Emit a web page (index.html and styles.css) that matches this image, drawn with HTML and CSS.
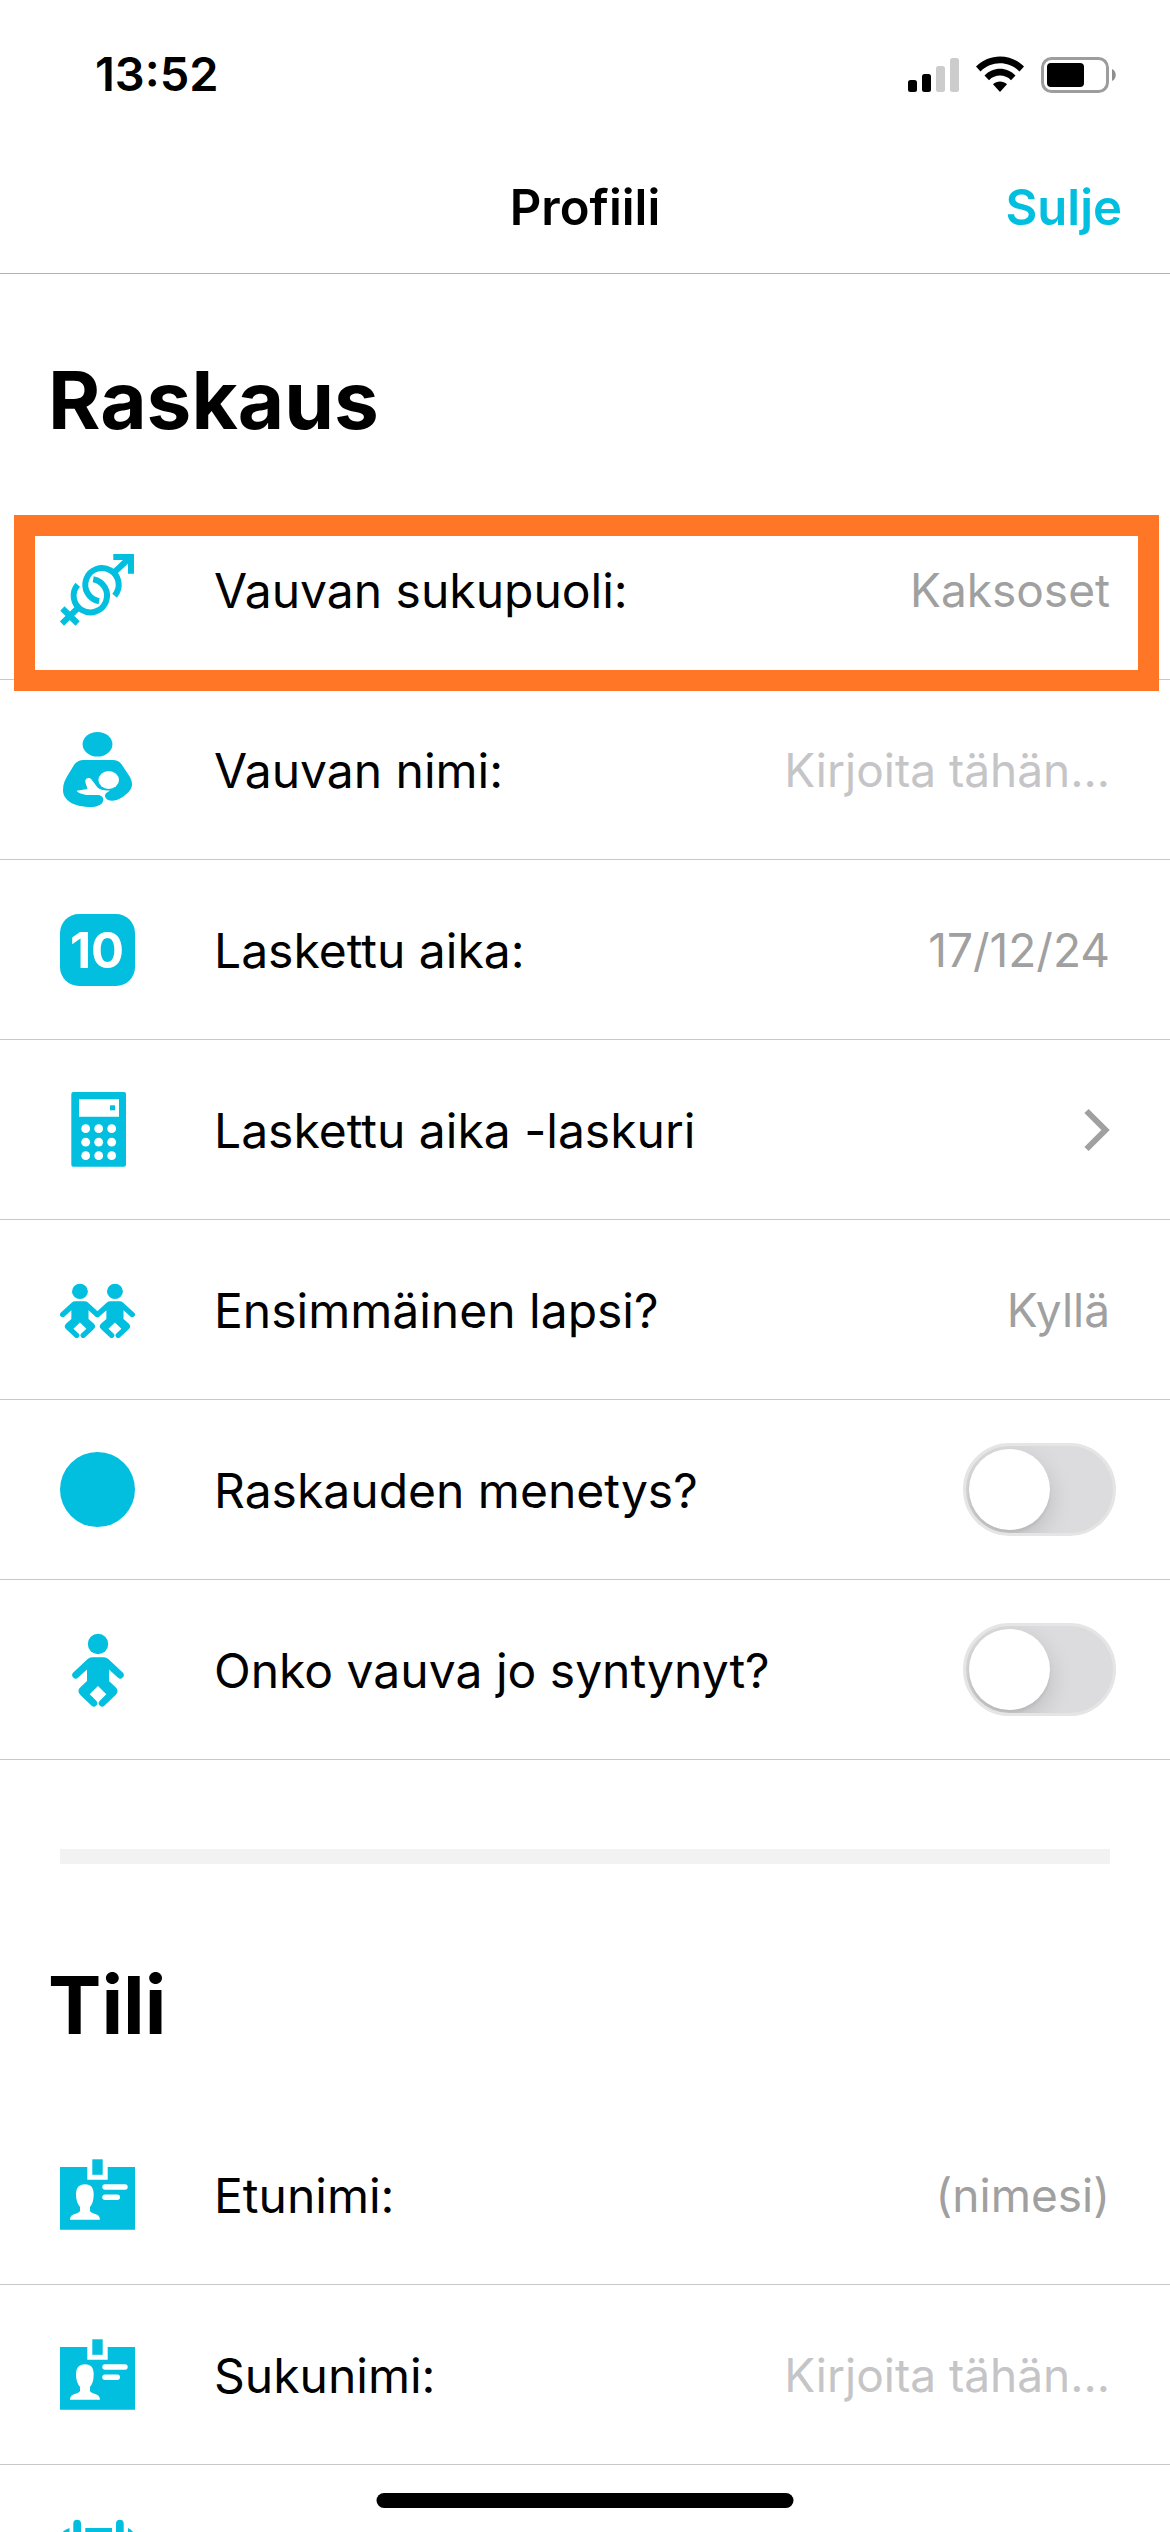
FILE: index.html
```html
<!DOCTYPE html>
<html lang="fi">
<head>
<meta charset="utf-8">
<meta name="viewport" content="width=device-width, initial-scale=1">
<title>Profiili</title>
<link rel="stylesheet" href="styles.css">
</head>
<body>
<svg class="sprite" aria-hidden="true">
  <symbol id="baby" viewBox="0 0 75 75">
    <circle cx="38" cy="12" r="10.2"/>
    <path d="M32 25.3H44Q46.500 25.300 48.300 27L62.700 40.600A3.400 3.400 0 0 1 57.800 45.600L49 37.500V49L55.600 55.300Q59.500 59 55.600 62.900L44.600 73.600A3.400 3.400 0 0 1 39.800 68.700L46.300 62.300L38 54L29.700 62.300L36.200 68.700A3.400 3.400 0 0 1 31.400 73.600L20.400 62.900Q16.500 59 20.400 55.300L27 49V37.500L18.200 45.600A3.400 3.400 0 0 1 13.300 40.600L27.700 27Q29.500 25.300 32 25.300Z"/>
  </symbol>
  <symbol id="badge" viewBox="0 0 75 75">
    <path d="M0 10H27.300V22.700H47.700V10H75V72.700H0Z"/>
    <rect x="32.300" y="2.300" width="10.400" height="15.500"/>
    <path class="cut" d="M25 27.300C31 27.300 33.700 31 33.700 37C33.700 43 32.500 47 30 50V54C31 57.500 40 55.500 40 62.700H10C10 55.500 19 57.500 20 54V50C17.500 47 16 43 16 37C16 31 19 27.300 25 27.300Z"/>
    <rect class="cut" x="42.300" y="27.300" width="25.400" height="5.400" rx="2.700"/>
    <rect class="cut" x="42.300" y="37.500" width="17.700" height="5.400" rx="2.700"/>
  </symbol>
</svg>

<div class="app">
  <header class="top">
    <div class="status">
      <time class="clock">13:52</time>
      <svg class="indicators" viewBox="0 0 208 37" aria-hidden="true">
        <rect x="0" y="24" width="9" height="12" rx="2.500"/>
        <rect x="14" y="18" width="9" height="18" rx="2.500"/>
        <rect class="off" x="28" y="10" width="9" height="26" rx="2.500"/>
        <rect class="off" x="42" y="2" width="9" height="34" rx="2.500"/>
        <path d="M68 10.500C81 -3 103 -3 116 10.500L111.500 15.500C101 4.500 83 4.500 72.500 15.500Z"/>
        <path d="M76.500 19.500C85 10.500 99 10.500 107.500 19.500L103 24.200C97 18 87 18 81 24.200Z"/>
        <path d="M85 28.200C89 24.500 95 24.500 99 28.200L92 36Z"/>
        <rect class="shell" x="134.500" y="2.500" width="65" height="33" rx="9"/>
        <rect x="139" y="7" width="37" height="24" rx="4"/>
        <path class="nub" d="M204 13C209 15 209 23 204 25Z"/>
      </svg>
    </div>
    <nav class="bar">
      <h1 class="title">Profiili</h1>
      <button class="close" type="button">Sulje</button>
    </nav>
  </header>

  <main class="content">
    <section>
      <h2 class="heading">Raskaus</h2>

      <div class="row row-marked">
        <svg class="icon" viewBox="0 0 75 75" aria-hidden="true">
          <g class="line">
            <path d="M54.600 43.700A16.700 16.700 0 1 0 39.100 49.200"/>
            <path d="M17.700 32.700A16.700 16.700 0 1 0 33.200 27.200"/>
            <path d="M53.500 21L70 5.500M53.300 5H71V21.700M18.500 55.500L1.900 71.500M2.400 56.500L17.600 71.500"/>
          </g>
        </svg>
        <label class="label" for="gender">Vauvan sukupuoli:</label>
        <select class="value" id="gender"><option>Kaksoset</option></select>
      </div>

      <div class="row">
        <svg class="icon" viewBox="0 0 75 75" aria-hidden="true">
          <ellipse cx="37.500" cy="12.300" rx="14.900" ry="12.300"/>
          <path d="M23.500 28H52.500C57 28 60 30 62 33L69 43.500C73 50 73 55 69 59.500C65 64 58 68.700 52 68.700C46 68.700 44 64.500 45.500 62C46.500 60.500 48 60 50 58.500C45 59 40 58 37.300 55.300L31.700 47.700C30.500 45.200 25.500 45 25.300 49C25.300 52 27 54 27.500 57L16.700 58.800C18 61.500 24 63 29 63H37C41 63 43.300 65 43.300 67.700C43.300 72 38 75 31 75C15 75 3 69 3 58C3 52 5 48 7 44.500L14 33C16.500 29.500 19.500 28 23.500 28Z"/>
          <ellipse class="cut" cx="48.700" cy="48" rx="10.300" ry="9"/>
        </svg>
        <label class="label" for="baby-name">Vauvan nimi:</label>
        <input class="value" id="baby-name" type="text" placeholder="Kirjoita tähän...">
      </div>

      <div class="row">
        <svg class="icon" viewBox="0 0 75 75" aria-hidden="true">
          <rect y="2" width="75" height="72" rx="19"/>
          <text class="day" x="37" y="56">10</text>
        </svg>
        <label class="label" for="due">Laskettu aika:</label>
        <input class="value" id="due" type="text" value="17/12/24">
      </div>

      <a class="row" href="#laskuri">
        <svg class="icon" viewBox="0 0 75 75" aria-hidden="true">
          <rect x="11.300" width="54.700" height="74.700" rx="2"/>
          <path class="cut" d="M19 7.300H59V24.700H19Z"/>
          <rect x="50" y="13.300" width="5" height="5"/>
          <g class="cut">
            <circle cx="25.700" cy="36.700" r="4.400"/><circle cx="38.700" cy="36.700" r="4.400"/><circle cx="51.700" cy="36.700" r="4.400"/>
            <circle cx="25.700" cy="50.200" r="4.400"/><circle cx="38.700" cy="50.200" r="4.400"/><circle cx="51.700" cy="50.200" r="4.400"/>
            <circle cx="25.700" cy="63.700" r="4.400"/><circle cx="38.700" cy="63.700" r="4.400"/><circle cx="51.700" cy="63.700" r="4.400"/>
          </g>
        </svg>
        <span class="label">Laskettu aika -laskuri</span>
        <svg class="chevron" viewBox="0 0 26 44" aria-hidden="true"><path d="M2.500 3L21.500 22L2.500 41"/></svg>
      </a>

      <div class="row">
        <svg class="icon" viewBox="0 0 75 75" aria-hidden="true">
          <g transform="translate(-9.700 10.500) scale(.78 .743)"><use href="#baby" width="75" height="75"/></g>
          <g transform="translate(25.300 10.500) scale(.78 .743)"><use href="#baby" width="75" height="75"/></g>
        </svg>
        <label class="label" for="first">Ensimmäinen lapsi?</label>
        <select class="value" id="first"><option>Kyllä</option></select>
      </div>

      <div class="row">
        <svg class="icon" viewBox="0 0 75 75" aria-hidden="true"><circle cx="37.500" cy="37.500" r="37.500"/></svg>
        <label class="label" for="loss">Raskauden menetys?</label>
        <input class="switch" id="loss" type="checkbox" role="switch">
      </div>

      <div class="row">
        <svg class="icon" viewBox="0 0 75 75" aria-hidden="true"><use href="#baby"/></svg>
        <label class="label" for="born">Onko vauva jo syntynyt?</label>
        <input class="switch" id="born" type="checkbox" role="switch">
      </div>
    </section>

    <hr class="divider">

    <section>
      <h2 class="heading">Tili</h2>

      <div class="row">
        <svg class="icon" viewBox="0 0 75 75" aria-hidden="true"><use href="#badge"/></svg>
        <label class="label" for="first-name">Etunimi:</label>
        <input class="value" id="first-name" type="text" value="(nimesi)">
      </div>

      <div class="row">
        <svg class="icon" viewBox="0 0 75 75" aria-hidden="true"><use href="#badge"/></svg>
        <label class="label" for="last-name">Sukunimi:</label>
        <input class="value" id="last-name" type="text" placeholder="Kirjoita tähän...">
      </div>

      <div class="row">
        <svg class="icon" viewBox="0 0 75 75" aria-hidden="true">
          <path d="M9.500 11V18Q9.500 24 17 24Q25.300 24 25.300 18V11H52V18Q52 24 60 24Q68 24 68 18V11Q75 14 75 22V64Q75 74 65 74H10Q0 74 0 64V22Q0 14 9.500 11Z"/>
          <rect x="13.300" y="2.700" width="7.700" height="18" rx="3.800"/>
          <rect x="56" y="2.700" width="7.700" height="18" rx="3.800"/>
        </svg>
      </div>
    </section>
  </main>

  <div class="home"></div>
</div>
</body>
</html>
```
FILE: styles.css
```css
* {
  box-sizing: border-box;
}

body {
  margin: 0;
  background: #fff;
  color: #000;
  font-family: Inter, "Liberation Sans", sans-serif;
  font-size: 48px;
  line-height: 60px;
}

.sprite {
  display: none;
}

.app {
  display: flex;
  flex-direction: column;
  height: 100vh;
  overflow: hidden;
}

.top {
  flex: none;
  border-bottom: 1px solid #b2b2b2;
}

.status {
  display: flex;
  align-items: center;
  justify-content: space-between;
  height: 142px;
  padding: 6px 54px 0 95px;
}

.clock {
  font-size: 47px;
  font-weight: 600;
}

.indicators {
  width: 208px;
  height: 37px;
}

.indicators .off {
  fill: #ccc;
}

.indicators .shell {
  fill: none;
  stroke: #9d9d9d;
  stroke-width: 3px;
}

.indicators .nub {
  fill: #8e8e8e;
}

.bar {
  display: grid;
  grid-template-columns: 1fr auto 1fr;
  align-items: center;
  height: 131px;
  padding: 0 48px;
}

.title {
  grid-column: 2;
  margin: 0;
  font-size: 49px;
  font-weight: 600;
}

.close {
  justify-self: end;
  padding: 0;
  border: 0;
  background: none;
  color: #02bfdf;
  font: inherit;
  font-size: 49px;
  font-weight: 600;
}

.content {
  flex: 1;
  min-height: 0;
  overflow-y: auto;
  scrollbar-width: none;
}

.heading {
  margin: 0;
  padding: 76px 48px 50px;
  font-size: 80px;
  font-weight: 700;
  line-height: 100px;
}

.row {
  position: relative;
  display: flex;
  align-items: center;
  height: 180px;
  padding: 0 60px;
  border-bottom: 1px solid #c8c8c8;
  color: inherit;
  text-decoration: none;
}

.row-marked::after {
  content: "";
  position: absolute;
  inset: 15px 11px -12px 14px;
  border: 21px solid #ff7626;
  pointer-events: none;
}

.icon {
  flex: none;
  width: 75px;
  height: 75px;
  margin-right: 79px;
  fill: #02bfdf;
}

.icon .line {
  fill: none;
  stroke: #02bfdf;
  stroke-width: 6px;
}

.cut,
.icon .cut {
  fill: #fff;
}

.day {
  fill: #fff;
  font-size: 49px;
  font-weight: 700;
  text-anchor: middle;
}

.label {
  flex: none;
  padding-top: 2px;
}

.value {
  flex: 1;
  min-width: 0;
  padding: 0;
  border: 0;
  background: none;
  appearance: none;
  color: #a0a0a0;
  font: inherit;
  font-size: 46px;
  text-align: right;
  text-align-last: right;
  outline: none;
}

.value::placeholder {
  color: #c5c5c7;
  opacity: 1;
}

.chevron {
  width: 26px;
  height: 44px;
  margin-left: auto;
  fill: none;
  stroke: #a0a0a0;
  stroke-width: 6px;
}

.switch {
  appearance: none;
  width: 153px;
  height: 93px;
  margin: 0 -6px 0 auto;
  padding: 3px;
  border: 3px solid #e5e5e5;
  border-radius: 47px;
  background: #dcdcde;
  overflow: hidden;
}

.switch::before {
  content: "";
  display: block;
  width: 81px;
  height: 81px;
  border-radius: 50%;
  background: #fff;
  box-shadow: 0 9px 24px rgba(0, 0, 0, 0.15), 0 3px 3px rgba(0, 0, 0, 0.06);
}

.switch:checked {
  background: #02bfdf;
}

.switch:checked::before {
  margin-left: auto;
}

.divider {
  height: 15px;
  margin: 89px 60px 15px;
  border: 0;
  background: #f2f2f2;
}

.home {
  position: fixed;
  bottom: 24px;
  left: 50%;
  width: 417px;
  height: 15px;
  border-radius: 8px;
  background: #000;
  transform: translateX(-50%);
}
```
